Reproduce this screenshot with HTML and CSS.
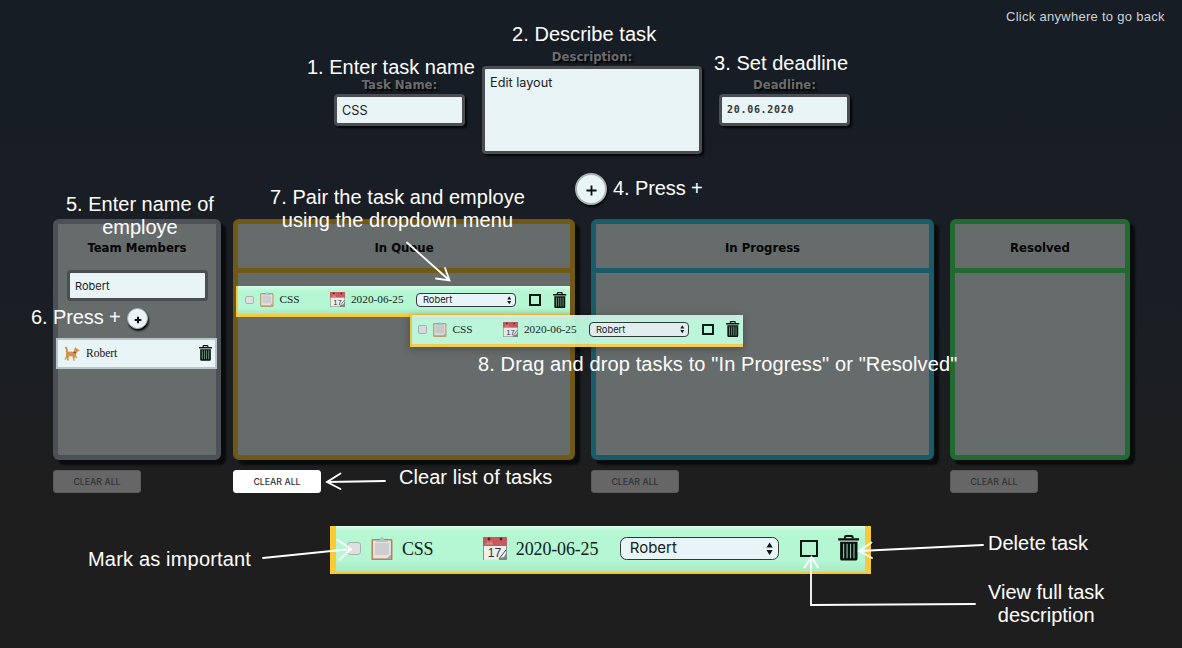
FILE: index.html
```html
<!DOCTYPE html>
<html lang="en">
<head>
<meta charset="utf-8">
<title>Task board help</title>
<link rel="stylesheet" href="styles.css">
</head>
<body>
<svg class="defs" aria-hidden="true">
  <symbol id="trash" viewBox="0 0 22 27">
    <path d="M7 4V2.2Q7 1 8.2 1h5.6Q15 1 15 2.2V4" fill="none" stroke="#08120d" stroke-width="2"/>
    <path d="M0 3.4h22v2.4H0z" fill="#08120d"/>
    <path d="M2 7h18v17.5q0 2-2 2H4q-2 0-2-2z" fill="#08120d"/>
    <path d="M5.6 9v15M9.2 9v15M12.8 9v15M16.4 9v15" stroke="#8fbda5" stroke-width="1.2"/>
  </symbol>
  <symbol id="clip" viewBox="0 0 22 24">
    <rect x=".5" y="2" width="21" height="21.5" rx="1.5" fill="#b9824d"/>
    <rect x="2" y="3.5" width="18" height="18" fill="#e4e2e2"/>
    <rect x="4" y="6" width="14" height="12" fill="#cfcdcf"/>
    <path d="M5 5V3h4q0-3 2-3t2 3h4v2z" fill="#b5c4c0"/>
    <path d="M20 21.500l-4 0 4-4z" fill="#a9a4a2"/>
  </symbol>
  <symbol id="cal" viewBox="0 0 24 24">
    <rect x=".5" y=".5" width="23" height="23" fill="#eef0f0" stroke="#8b8f8f"/>
    <path d="M0 0h24v9H0z" fill="#c65a5e"/>
    <path d="M3 7h7M5 4v3M8 4v3" stroke="#e59a9a"/>
    <circle cx="6" cy="2" r="1.4" fill="#5a1d22"/><circle cx="18" cy="2" r="1.4" fill="#5a1d22"/>
    <path d="M24 15v9h-9l2-3 4-1z" fill="#7d8787"/><path d="M23 13l-7 9" stroke="#444b4b"/>
  </symbol>
  <symbol id="dog" viewBox="0 0 16 15">
    <path d="M1.500 1Q3.500 3 2.800 6.500" fill="none" stroke="#c8843c" stroke-width="1.700"/>
    <path d="M2 6.500Q5 5 9.500 6L10.500 2.500 11.700 1l.8 1.500 2.500 1.200.5 1.300-2.800.8-.7 4.200 1.500 1.500-1 .8-2-1.500.2 4H9.500L8.500 10.500 5.500 10 4.500 12l.5 2.500H3.500L2.500 12 1.500 14 .5 13.500l1.500-3.500z" fill="#d3924c"/>
    <path d="M9.500 6l2.500 1" stroke="#8d3d24" stroke-width="1.200"/>
  </symbol>
  <symbol id="sort" viewBox="0 0 8 14">
    <path d="M4 0l3.500 5.500h-7zM4 14L.5 8.500h7z" fill="#101414"/>
  </symbol>
</svg>

<main class="page">
  <form class="task-form">
    <label class="field">Task Name:<span class="box">CSS</span></label>
    <label class="field field-wide">Description:<span class="box area">Edit layout</span></label>
    <label class="field">Deadline:<span class="box date">20.06.2020</span></label>
  </form>
  <div class="plus"><svg viewBox="0 0 12 12"><path d="M6 .5v11M.5 6h11"/></svg></div>

  <section class="board">
    <div class="col team">
      <div class="panel">
        <h2>Team Members</h2>
        <span class="box name">Robert</span>
        <div class="plus small"><svg viewBox="0 0 12 12"><path d="M6 1v10M1 6h10"/></svg></div>
        <div class="member">
          <svg class="dog"><use href="#dog"/></svg><span>Robert</span><svg class="bin"><use href="#trash"/></svg>
        </div>
      </div>
      <span class="clear">CLEAR ALL</span>
    </div>
    <div class="col queue">
      <div class="panel">
        <h2>In Queue</h2>
        <div class="card">
          <i class="check"></i><svg class="clip"><use href="#clip"/></svg><span>CSS</span><div class="cal"><svg><use href="#cal"/></svg><b>17</b></div><span>2020-06-25</span>
          <div class="select"><span>Robert</span><svg><use href="#sort"/></svg></div><i class="square"></i><svg class="bin"><use href="#trash"/></svg>
        </div>
      </div>
      <span class="clear lit">CLEAR ALL</span>
    </div>
    <div class="col progress">
      <div class="panel"><h2>In Progress</h2></div>
      <span class="clear">CLEAR ALL</span>
    </div>
    <div class="col resolved">
      <div class="panel"><h2>Resolved</h2></div>
      <span class="clear">CLEAR ALL</span>
    </div>
  </section>

  <div class="card large">
    <i class="check"></i><svg class="clip"><use href="#clip"/></svg><span>CSS</span><div class="cal"><svg><use href="#cal"/></svg><b>17</b></div><span>2020-06-25</span>
    <div class="select"><span>Robert</span><svg><use href="#sort"/></svg></div><i class="square"></i><svg class="bin"><use href="#trash"/></svg>
  </div>
</main>

<div class="card dragged">
  <i class="check"></i><svg class="clip"><use href="#clip"/></svg><span>CSS</span><div class="cal"><svg><use href="#cal"/></svg><b>17</b></div><span>2020-06-25</span>
  <div class="select"><span>Robert</span><svg><use href="#sort"/></svg></div><i class="square"></i><svg class="bin"><use href="#trash"/></svg>
</div>

<div class="notes">
  <p class="n-back">Click anywhere to go back</p>
  <p class="n1">1. Enter task name</p>
  <p class="n2">2. Describe task</p>
  <p class="n3">3. Set deadline</p>
  <p class="n4">4. Press +</p>
  <p class="n5">5. Enter name of<br>employe</p>
  <p class="n6">6. Press +</p>
  <p class="n7">7. Pair the task and employe<br>using the dropdown menu</p>
  <p class="n8">8. Drag and drop tasks to "In Progress" or "Resolved"</p>
  <p class="n9">Clear list of tasks</p>
  <p class="n10">Mark as important</p>
  <p class="n11">Delete task</p>
  <p class="n12">View full task<br>description</p>
  <svg class="arrows" viewBox="0 0 1182 648">
    <path d="M407 242.500L449 280M436 278.500L449.500 280.500 445 268"/>
    <path d="M385 481L327 482M340.500 473.500L327 482l13.500 7"/>
    <path d="M263 558L351 549M337 539.500L351 549l-12 11"/>
    <path d="M983 545L859 551M871.500 542.500L859 551l13 7"/>
    <path d="M975 604L811 605V558M804.500 567.500L811.500 557l6.500 10.500"/>
  </svg>
</div>
</body>
</html>
```

FILE: styles.css
```css
* { box-sizing: border-box; }
body {
  margin: 0;
  width: 1182px;
  height: 648px;
  overflow: hidden;
  position: relative;
  background: linear-gradient(#161d25 0, #191d25 190px, #1b1e23 340px, #1e1e1f 480px, #1e1e1e 100%);
  font-family: "Liberation Sans", sans-serif;
}
.defs { position: absolute; width: 0; height: 0; }
.page { display: flex; flex-direction: column; padding-top: 48px; }

.task-form { display: flex; align-items: center; gap: 17px; margin-left: 334px; height: 106px; }
.field {
  display: flex;
  flex-direction: column;
  width: 131px;
  text-align: center;
  font: bold 13px/18px "DejaVu Sans Condensed", "DejaVu Sans", sans-serif;
  font-stretch: condensed;
  color: #6b6c6e;
  text-shadow: 2px 2px 2px #000;
}
.field-wide { width: 220px; }
.box {
  display: block;
  height: 32px;
  padding: 0 5px;
  border: 3px solid #4a4e52;
  border-radius: 4px;
  background: #e9f4f6;
  box-shadow: 2px 2px 2px #050607;
  color: #1c2022;
  font: 12.7px/27px Inter, sans-serif;
  text-align: left;
  text-shadow: none;
}
.area { height: 88px; line-height: 28px; }
.date { font: bold 10px/26px "DejaVu Sans Mono", monospace; letter-spacing: .7px; color: #33383a; }

.plus {
  display: flex;
  align-items: center;
  justify-content: center;
  width: 32px;
  height: 32px;
  margin: 19px 0 0 575px;
  border-radius: 50%;
  border: 2px solid #aab3b8;
  background: #e9f4f6;
  box-shadow: 1px 2px 2px #06080a;
}
.plus svg { width: 11px; height: 11px; margin-top: 2px; stroke: #0a0c0d; stroke-width: 2; }
.plus.small { width: 21px; height: 21px; margin: 7px 0 0 69px; border-width: 1px; }
.plus.small svg { width: 8px; height: 8px; stroke-width: 3; }

.board { display: flex; margin: 14px 0 0 53px; }
.col { display: flex; flex-direction: column; align-items: flex-start; }
.team { width: 168px; margin-right: 12px; --line: #4b5156; }
.queue { width: 342px; margin-right: 16px; --line: #705815; }
.progress { width: 343px; margin-right: 16px; --line: #1a5b69; }
.resolved { width: 180px; --line: #216a31; }
.panel {
  width: 100%;
  height: 241px;
  border: 5px solid var(--line);
  border-radius: 6px;
  background: #666b6b;
  box-shadow: 5px 5px 2px #090b0d;
}
.panel h2 {
  margin: 0;
  height: 49px;
  border-bottom: 5px solid var(--line);
  font: bold 13px/47px "DejaVu Sans Condensed", "DejaVu Sans", sans-serif;
  font-stretch: condensed;
  text-align: center;
  color: #050505;
}
.team h2 { border-bottom: 0; height: 46px; }
.name { width: 141px; height: 31px; margin-left: 9px; font-size: 11px; box-shadow: none; }
.member {
  display: flex;
  align-items: center;
  width: 161px;
  height: 31px;
  margin: 9px 0 0 -2px;
  padding: 0 3px 1px 6px;
  border: 2px solid #b9c5cb;
  background: #e9f4f6;
  font: 11.500px "Liberation Serif", serif;
  color: #111;
}
.dog { width: 16px; height: 15px; margin-right: 6px; }
.member .bin { width: 13px; height: 16px; margin-left: auto; }

.clear {
  width: 88px;
  height: 23px;
  margin-top: 10px;
  border: 1px solid #5a5a5b;
  border-radius: 3px;
  background: #666667;
  color: #313132;
  font: 500 8.800px/22px Inter, sans-serif;
  text-align: center;
}
.lit { background: #fff; border-color: #fff; color: #333; }

.card {
  display: grid;
  grid-template-columns: 1.33em 1.72em 4.500em 1.83em 5.78em 10em 2.100em auto;
  align-items: center;
  width: 334px;
  height: 31px;
  margin: 13px 0 0 -2px;
  padding: 0 0 3px 7px;
  border-left: 2px solid #f5ca3c;
  background: linear-gradient(#d9fbea 0, #b5f7d3 5px, #b5f7d3 22px, #a6e6c1 28px, #f5ca3c 28px);
  font: 11.3px/1 "Liberation Serif", serif;
  color: #10221a;
  position: relative;
  white-space: nowrap;
}
.check { width: .76em; height: .76em; border: 1px solid #a9b3ae; border-radius: .16em; background: #dedfe0; }
.clip { width: 1.22em; height: 1.33em; }
.cal { position: relative; width: 1.33em; height: 1.33em; }
.cal svg { display: block; width: 100%; height: 100%; }
.cal b { position: absolute; left: .4em; top: .85em; font: .68em/1 "Liberation Sans", sans-serif; color: #333; }
.select {
  display: flex;
  align-items: center;
  justify-content: space-between;
  width: 8.850em;
  height: 1.3em;
  padding: 0 .3em 0 .5em;
  border: 1px solid #30383a;
  border-radius: .36em;
  background: #e9f4f8;
}
.select span { font: .83em/1.2 Inter, sans-serif; }
.select svg { width: .4em; height: .75em; }
.square { width: 1em; height: .98em; border: 2px solid #0a1a12; }
.card .bin { width: 1.200em; height: 1.450em; }
.large {
  width: 541px;
  height: 48px;
  margin: 33px 0 0 330px;
  padding: 0 0 3px 11px;
  border-left: 6px solid #fbcb33;
  border-right: 6px solid #f8c93a;
  background: linear-gradient(#e0fbee 0, #b5f7d3 5px, #b5f7d3 34px, #a8e8c3 46px, #f5c535 46px);
  font-size: 18px;
}
.large > span { letter-spacing: -.15px; }
.large .square { border-width: 2.500px; }
.dragged {
  position: absolute;
  left: 410px;
  top: 315px;
  width: 333px;
  height: 32px;
  margin: 0;
  padding-left: 6px;
  opacity: .95;
  background: linear-gradient(#d8ecea 0, #c0fde0 6px, #c0fde0 29px, #fbd250 29px);
  box-shadow: 0 2px 8px rgba(0, 0, 0, .3);
}

.notes { position: absolute; inset: 0; color: #fff; font-size: 20px; line-height: 23px; white-space: nowrap; }
.notes p { position: absolute; margin: 0; text-align: center; }
.notes .n-back { left: 1006px; top: 5px; font-size: 13px; letter-spacing: .28px; color: #ced3d6; }
.n1 { left: 307px; top: 56px; }
.n2 { left: 512px; top: 23px; letter-spacing: .05px; }
.n3 { left: 714px; top: 52px; letter-spacing: .05px; }
.n4 { left: 613px; top: 177px; letter-spacing: -.1px; }
.n5 { left: 66px; top: 193px; }
.n6 { left: 31px; top: 306px; letter-spacing: -.1px; }
.n7 { left: 270px; top: 186px; letter-spacing: .05px; }
.n8 { left: 478px; top: 353px; letter-spacing: .12px; }
.n9 { left: 399px; top: 466px; letter-spacing: .06px; }
.n10 { left: 88px; top: 548px; letter-spacing: .18px; }
.n11 { left: 988px; top: 532px; }
.n12 { left: 988px; top: 581px; }
.arrows { position: absolute; inset: 0; width: 1182px; height: 648px; fill: none; stroke: #fff; stroke-width: 1.8; stroke-linecap: round; }
```
